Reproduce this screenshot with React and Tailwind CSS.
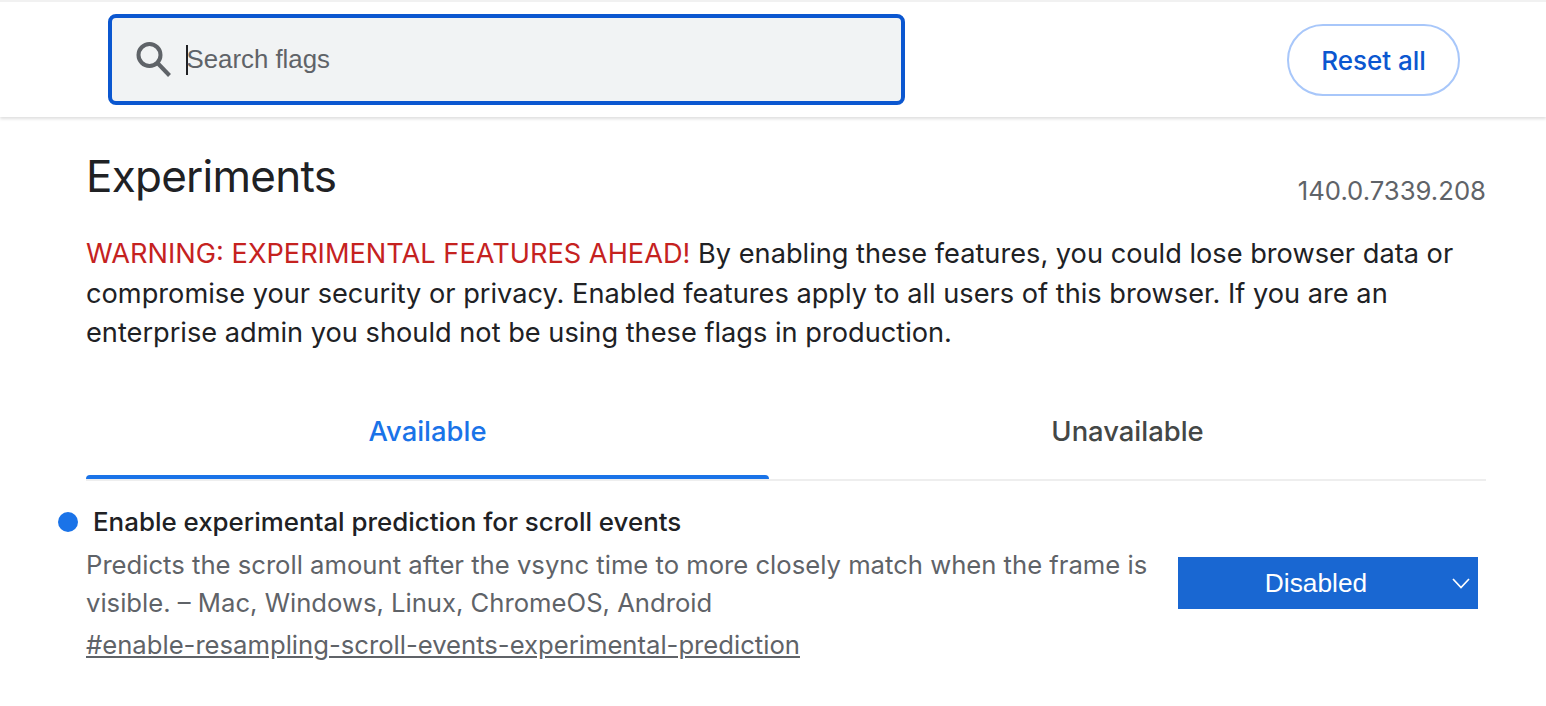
import React from "react";

export default function App() {
  return (
    <div className="w-[1546px] h-[706px] overflow-hidden bg-white font-['Inter',sans-serif] text-[#202124]">
      <header className="h-[117px] border-t-[2px] border-[#f1f1f1] shadow-[0_2px_3px_rgba(0,0,0,0.13)] bg-white flex items-start pl-[108px] pr-[86px] pt-[12px]">
        <div className="w-[797px] h-[91px] rounded-[8px] border-[4px] border-[#0b57d0] bg-[#f1f3f4] flex items-center pl-[23px]">
          <svg width="40" height="40" viewBox="0 0 40 40" fill="none" stroke="#5f6368" className="mt-[-1px]">
            <circle cx="14.5" cy="16" r="11" strokeWidth="4" />
            <path d="M22.5 24 L34.5 36.5" strokeWidth="4" />
          </svg>
          <div className="ml-[11px] w-[1.5px] h-[30px] bg-[#202124]" />
          <span className="ml-[-1px] text-[25.8px] text-[#5f6368] font-['Liberation_Sans',sans-serif]">Search flags</span>
        </div>
        <div className="ml-auto mt-[10px] w-[173px] h-[72px] rounded-full border-2 border-[#a8c7fa] flex items-center justify-center text-[26px] font-medium text-[#0b57d0]">
          Reset all
        </div>
      </header>

      <main className="pl-[86px] pr-[60px]">
        <div className="flex justify-between items-start h-[117px]">
          <h1 className="text-[44px] leading-[56px] mt-[31px] tracking-[-0.75px]">Experiments</h1>
          <span className="text-[25.7px] leading-[32px] mt-[58px] text-[#5f6368]">140.0.7339.208</span>
        </div>
        <p className="text-[27.2px] leading-[39.5px] w-[1400px]">
          <span className="text-[#c5221f]">WARNING: EXPERIMENTAL FEATURES AHEAD!</span> By enabling these features, you could lose browser data or compromise your security or privacy. Enabled features apply to all users of this browser. If you are an enterprise admin you should not be using these flags in production.
        </p>

        <div className="mt-[31px] h-[97px] w-[1400px] flex border-b-2 border-[#eeeeee]">
          <div className="w-[683px] h-[95px] flex flex-col text-[27.4px] leading-[36px] font-medium text-[#1a73e8]">
            <div className="flex-1 flex items-start justify-center pt-[29px]">Available</div>
            <div className="h-[4px] bg-[#1a73e8] rounded-t-[4px]" />
          </div>
          <div className="flex-1 flex items-start justify-center pt-[29px] text-[27.4px] leading-[36px] font-medium text-[#444746]">
            Unavailable
          </div>
        </div>

        <div className="relative w-[1400px] flex items-start justify-between pt-[21px]">
          <div>
            <div className="relative text-[25.9px] leading-[40px] font-medium pl-[7px]">
              <span className="absolute left-[-28px] top-[10px] w-[20px] h-[20px] rounded-full bg-[#1a73e8]" />
              Enable experimental prediction for scroll events
            </div>
            <p className="text-[25.65px] leading-[38px] text-[#5f6368] w-[1080px] mt-[4px]">
              Predicts the scroll amount after the vsync time to more closely match when the frame is visible. – Mac, Windows, Linux, ChromeOS, Android
            </p>
            <a className="block text-[25.65px] leading-[40px] mt-[3px] text-[#5f6368] underline">
              #enable-resampling-scroll-events-experimental-prediction
            </a>
          </div>
          <div className="relative mt-[55px] mr-[8px] w-[300px] h-[52px] bg-[#1967d2] flex items-center justify-center pr-[24px] pt-[2px] text-[26.3px] text-white font-['Liberation_Sans',sans-serif]">
            Disabled
            <svg width="18" height="12" viewBox="0 0 18 12" fill="none" stroke="white" strokeWidth="1.7" className="absolute right-[8px] top-[21px]">
              <path d="M1 1 L9 9.5 L17 1" />
            </svg>
          </div>
        </div>
      </main>
    </div>
  );
}
